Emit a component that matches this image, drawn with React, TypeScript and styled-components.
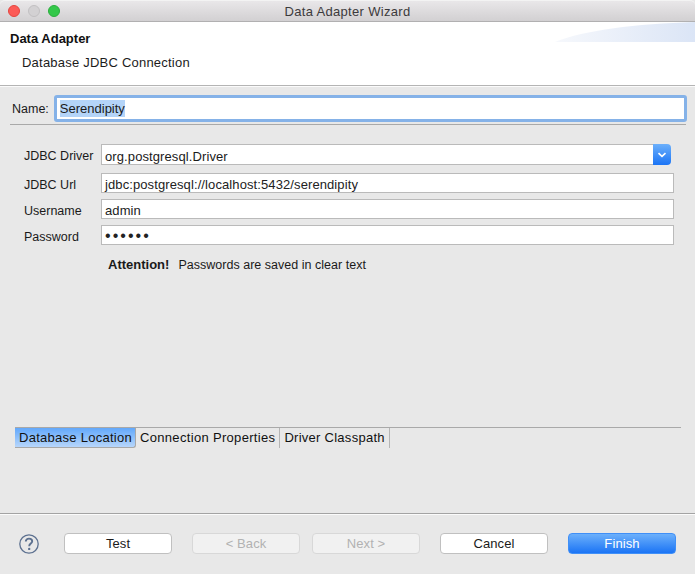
import React from 'react';
import styled, { createGlobalStyle } from 'styled-components';

const GlobalStyle = createGlobalStyle`
  html, body {
    margin: 0;
    padding: 0;
    background: #e8e8e8;
  }
  * {
    box-sizing: border-box;
  }
`;

const Window = styled.div`
  width: 695px;
  height: 574px;
  display: flex;
  flex-direction: column;
  overflow: hidden;
  background: #e8e8e8;
  color: #1a1a1a;
  font-family: 'Liberation Sans', Arial, sans-serif;
  font-size: 13px;
`;

const TitleBar = styled.div`
  height: 22px;
  flex: none;
  display: grid;
  grid-template-columns: 1fr auto 1fr;
  align-items: center;
  padding: 0 8px;
  border-radius: 5px 5px 0 0;
  border-top: 1px solid #f3f3f3;
  border-bottom: 1px solid #b1b0b1;
  background: linear-gradient(#e9e7e9, #d2d0d2);
`;

const Lights = styled.div`
  display: flex;
  gap: 8px;
`;

const Light = styled.span<{ $color: string; $edge: string }>`
  width: 12px;
  height: 12px;
  border-radius: 50%;
  background: ${(p) => p.$color};
  border: 1px solid ${(p) => p.$edge};
`;

const WindowTitle = styled.div`
  font-size: 13px;
  color: #3c3a3c;
  letter-spacing: 0.32px;
`;

const Banner = styled.div`
  position: relative;
  height: 64px;
  flex: none;
  background: #fff;
  border-bottom: 1px solid #b4b4b4;
  padding: 9px 10px 0;
`;

const Swoosh = styled.svg`
  position: absolute;
  top: 0;
  right: 0;
`;

const BannerTitle = styled.div`
  font-weight: bold;
  font-size: 13px;
  line-height: 15px;
  color: #111;
`;

const BannerSubtitle = styled.div`
  margin: 9px 0 0 12px;
  line-height: 15px;
  font-size: 13px;
  letter-spacing: 0.22px;
  color: #1c1c1c;
`;

const Body = styled.div`
  flex: 1;
  display: flex;
  flex-direction: column;
  border-top: 1px solid #fbfbfb;
  padding: 8px 8px 0 10px;
`;

const NameRow = styled.div`
  display: flex;
  align-items: center;
  padding-left: 2px;
  gap: 5px;
  font-size: 12.5px;
`;

const NameField = styled.div`
  width: 634px;
  height: 27px;
  background: #fff;
  border: 3px solid #85b2e8;
  border-radius: 3px;
  padding-left: 3px;
  display: flex;
  align-items: center;
  font-size: 13px;
`;

const Selected = styled.span`
  background: #b4d4f8;
  line-height: 17px;
`;

const NameRule = styled.div`
  height: 1px;
  width: 676px;
  margin-top: 2px;
  background: #a9a9a9;
`;

const Form = styled.div`
  display: grid;
  grid-template-columns: 77px 573px;
  grid-template-rows: 29px 26px 26px 26px;
  align-items: start;
  margin: 19px 0 0 14px;
  font-size: 12.5px;
`;

const FieldLabel = styled.div`
  padding-top: 5px;
  line-height: 15px;
`;

const DriverCell = styled.div`
  display: flex;
  height: 21px;
  width: 570px;
`;

const DriverValue = styled.div`
  flex: 1;
  background: #fff;
  border: 1px solid #bababa;
  border-right: none;
  padding: 2px 0 0 3px;
  font-size: 13px;
  line-height: 19px;
  letter-spacing: 0.1px;
`;

const DriverArrow = styled.div`
  width: 18px;
  display: flex;
  align-items: center;
  justify-content: center;
  border-radius: 0 4px 4px 0;
  background: linear-gradient(#6cb0fb, #1b74f5);
`;

const TextBox = styled.div`
  height: 20px;
  background: #fff;
  border: 1px solid #bababa;
  padding: 1px 0 0 3px;
  font-size: 13px;
  line-height: 19px;
  letter-spacing: 0.1px;
  color: #222;
`;

const Dots = styled(TextBox)`
  letter-spacing: 2.05px;
  font-size: 16px;
  line-height: 18px;
`;

const Notice = styled.div`
  display: flex;
  gap: 9px;
  margin: 7px 0 0 98px;
  line-height: 14px;
  font-size: 12.5px;
  letter-spacing: 0.02px;
`;

const Strong = styled.span`
  font-weight: bold;
  font-size: 13px;
  letter-spacing: 0;
`;

const TabStrip = styled.div`
  display: flex;
  width: 666px;
  height: 21px;
  margin: auto 0 65px 5px;
  border-top: 1px solid #a9a9a9;
`;

const Tab = styled.div<{ $active?: boolean; $spacing?: number }>`
  padding: 0 4px;
  line-height: 19px;
  font-size: 13px;
  letter-spacing: ${(p) => p.$spacing ?? 0.27}px;
  color: #111;
  border-right: 1px solid #b5b5b5;
  ${(p) =>
    p.$active &&
    `
    padding-right: 3px;
    background: linear-gradient(#62a8fb, #b7d6fb);
    border-right: 1px solid #a8a8a8;
    border-bottom: 1px solid #a8a8a8;
    border-bottom-right-radius: 3px;
  `}
`;

const Footer = styled.div`
  height: 61px;
  flex: none;
  display: flex;
  align-items: flex-start;
  padding: 19px 0 0 19px;
  border-top: 1px solid #a3a3a3;
  box-shadow: inset 0 1px 0 #fbfbfb;
`;

const HelpIcon = styled.svg`
  flex: none;
  margin: 1px 25px 0 0;
`;

const Buttons = styled.div`
  display: flex;
  gap: 20px;
`;

const Button = styled.div<{ $kind?: 'disabled' | 'primary' }>`
  width: 108px;
  height: 21px;
  border-radius: 4px;
  text-align: center;
  font-size: 13px;
  line-height: 19px;
  letter-spacing: 0.1px;
  border: 1px solid #c0c0c0;
  background: #fff;
  color: #1a1a1a;
  ${(p) =>
    p.$kind === 'disabled' &&
    `
    border-color: #d8d8d8;
    background: #f1f1f1;
    color: #b2b2b2;
  `}
  ${(p) =>
    p.$kind === 'primary' &&
    `
    border-color: #3f8ff7;
    background: linear-gradient(#6cb0fb, #1b74f5);
    color: #fff;
  `}
`;

const NarrowGap = styled.div`
  display: flex;
  gap: 12px;
`;

export default function App() {
  return (
    <Window>
      <GlobalStyle />
      <TitleBar>
        <Lights>
          <Light $color="#fc5b57" $edge="#e5453f" />
          <Light $color="#d3d1d3" $edge="#c2c0c2" />
          <Light $color="#34c84a" $edge="#2aae3d" />
        </Lights>
        <WindowTitle>Data Adapter Wizard</WindowTitle>
      </TitleBar>
      <Banner>
        <Swoosh width="140" height="20" viewBox="0 0 140 20">
          <defs>
            <linearGradient id="swoosh" x1="0" x2="1" y1="0" y2="0">
              <stop offset="0" stopColor="#f6f8fc" />
              <stop offset="1" stopColor="#dbe5f6" />
            </linearGradient>
          </defs>
          <path d="M0 20 C30 8 80 2 140 0 L140 20 Z" fill="url(#swoosh)" />
        </Swoosh>
        <BannerTitle>Data Adapter</BannerTitle>
        <BannerSubtitle>Database JDBC Connection</BannerSubtitle>
      </Banner>
      <Body>
        <NameRow>
          <span>Name:</span>
          <NameField>
            <Selected>Serendipity</Selected>
          </NameField>
        </NameRow>
        <NameRule />
        <Form>
          <FieldLabel>JDBC Driver</FieldLabel>
          <DriverCell>
            <DriverValue>org.postgresql.Driver</DriverValue>
            <DriverArrow>
              <svg width="10" height="6" viewBox="0 0 10 6">
                <path d="M1.5 1.2 L5 4.4 L8.5 1.2" fill="none" stroke="#fff" strokeWidth="1.6" />
              </svg>
            </DriverArrow>
          </DriverCell>
          <FieldLabel>JDBC Url</FieldLabel>
          <TextBox>jdbc:postgresql://localhost:5432/serendipity</TextBox>
          <FieldLabel>Username</FieldLabel>
          <TextBox>admin</TextBox>
          <FieldLabel>Password</FieldLabel>
          <Dots>••••••</Dots>
        </Form>
        <Notice>
          <Strong>Attention!</Strong>
          <span>Passwords are saved in clear text</span>
        </Notice>
        <TabStrip>
          <Tab $active>Database Location</Tab>
          <Tab $spacing={0.32}>Connection Properties</Tab>
          <Tab>Driver Classpath</Tab>
        </TabStrip>
      </Body>
      <Footer>
        <HelpIcon width="20" height="20" viewBox="0 0 20 20">
          <circle cx="10" cy="10" r="9.2" fill="none" stroke="#5d7190" strokeWidth="1.3" />
          <path
            d="M6.8 7.6 C6.8 5.6 8.2 4.6 10 4.6 C11.9 4.6 13.2 5.7 13.2 7.3 C13.2 9.6 10.2 9.6 10.2 12.2"
            fill="none"
            stroke="#5d7190"
            strokeWidth="1.9"
          />
          <circle cx="10.2" cy="14.9" r="1.2" fill="#5d7190" />
        </HelpIcon>
        <Buttons>
          <Button>Test</Button>
          <NarrowGap>
            <Button $kind="disabled">&lt; Back</Button>
            <Button $kind="disabled">Next &gt;</Button>
          </NarrowGap>
          <Button>Cancel</Button>
          <Button $kind="primary">Finish</Button>
        </Buttons>
      </Footer>
    </Window>
  );
}
